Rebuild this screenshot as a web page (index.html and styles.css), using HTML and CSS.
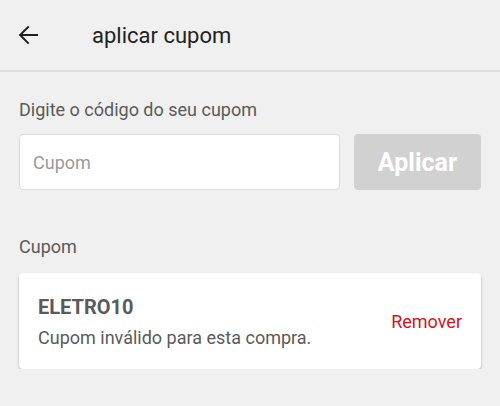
FILE: index.html
```html
<!DOCTYPE html>
<html lang="pt-BR">
<head>
    <meta charset="UTF-8">
    <meta name="viewport" content="width=device-width, initial-scale=1.0">
    <title>Aplicar cupom</title>
    <link rel="stylesheet" href="styles.css">
</head>
<body>
    <header class="toolbar">
        <button class="back" aria-label="Voltar">
            <svg width="30" height="30" viewBox="0 0 24 24"><path d="M20 11.2H7.6l5.5-5.5L12 4.6l-7.4 7.4 7.4 7.4 1.1-1.1-5.5-5.5H20z" fill="#1e1e1e"/></svg>
        </button>
        <h1>aplicar cupom</h1>
    </header>

    <main class="content">
        <label for="couponCode" class="label">Digite o código do seu cupom</label>
        <div class="coupon-row">
            <input type="text" id="couponCode" placeholder="Cupom">
            <button class="apply" disabled>Aplicar</button>
        </div>

        <p class="label section">Cupom</p>
        <div class="coupon-card">
            <div class="coupon-info">
                <strong>ELETRO10</strong>
                <span>Cupom inválido para esta compra.</span>
            </div>
            <a href="#" class="remove">Remover</a>
        </div>
    </main>
</body>
</html>
```

FILE: styles.css
```css
body {
    font-family: Roboto, 'Noto Sans', sans-serif;
    background-color: #f0f0f0;
    color: #555;
    margin: 0;
    padding: 0;
}
.toolbar {
    display: flex;
    align-items: center;
    height: 72px;
    border-bottom: 2px solid #dedede;
    box-sizing: border-box;
}
.back {
    display: flex;
    background: none;
    border: none;
    padding: 0;
    margin-left: 13px;
    width: 30px;
    height: 30px;
    cursor: pointer;
}
.toolbar h1 {
    margin: 0 0 0 49px;
    font-size: 22px;
    font-weight: normal;
    color: #222;
}
.content {
    padding: 0 19px;
}
.label {
    display: block;
    margin: 27px 0 14px;
    font-size: 18px;
    color: #5a5a5a;
}
.section {
    margin: 46px 0 16px;
}
.coupon-row {
    display: flex;
    gap: 14px;
}
.coupon-row input {
    flex: 1;
    height: 56px;
    padding: 0 13px;
    border: 1px solid #dcdcdc;
    border-radius: 4px;
    box-sizing: border-box;
    font-family: inherit;
    font-size: 18px;
    color: #333;
}
.coupon-row input::placeholder {
    color: #9a9a9a;
}
.apply {
    width: 127px;
    height: 56px;
    border: none;
    border-radius: 4px;
    background-color: #d1d1d1;
    color: #fff;
    font-family: inherit;
    font-size: 25px;
    font-weight: bold;
}
.coupon-card {
    display: flex;
    align-items: center;
    justify-content: space-between;
    height: 96px;
    padding: 0 19px;
    background: #fff;
    border-radius: 4px;
    box-shadow: 0 2px 3px rgba(0, 0, 0, 0.25);
    box-sizing: border-box;
}
.coupon-info {
    display: flex;
    flex-direction: column;
    gap: 8px;
}
.coupon-info strong {
    font-size: 20px;
    color: #5a5a5a;
}
.coupon-info span {
    font-size: 18px;
    color: #5a5a5a;
}
.remove {
    color: #d8101a;
    font-size: 18px;
    text-decoration: none;
}
```
